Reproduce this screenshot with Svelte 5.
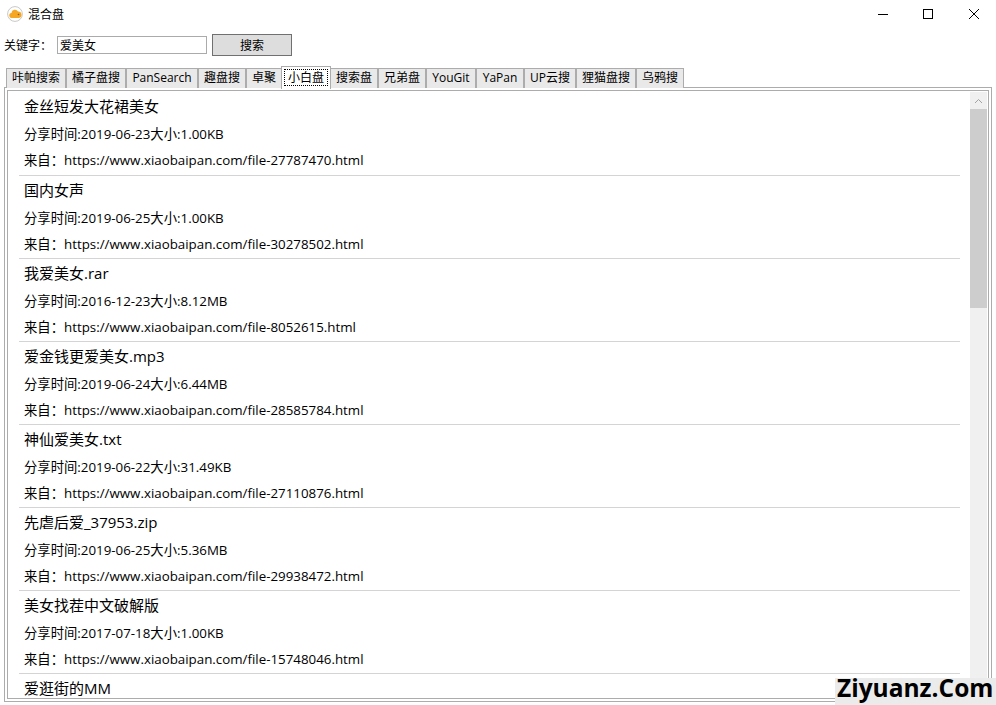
<script>
  const tabs = [
    { name: "咔帕搜索", width: 60 },
    { name: "橘子盘搜", width: 60 },
    { name: "PanSearch", width: 72 },
    { name: "趣盘搜", width: 48 },
    { name: "卓聚", width: 36 },
    { name: "小白盘", width: 50 },
    { name: "搜索盘", width: 48 },
    { name: "兄弟盘", width: 48 },
    { name: "YouGit", width: 50 },
    { name: "YaPan", width: 48 },
    { name: "UP云搜", width: 52 },
    { name: "狸猫盘搜", width: 60 },
    { name: "乌鸦搜", width: 48 }
  ];
  const active = 5;
  const results = [
    { title: "金丝短发大花裙美女", date: "2019-06-23", size: "1.00KB", id: "27787470" },
    { title: "国内女声", date: "2019-06-25", size: "1.00KB", id: "30278502" },
    { title: "我爱美女.rar", date: "2016-12-23", size: "8.12MB", id: "8052615" },
    { title: "爱金钱更爱美女.mp3", date: "2019-06-24", size: "6.44MB", id: "28585784" },
    { title: "神仙爱美女.txt", date: "2019-06-22", size: "31.49KB", id: "27110876" },
    { title: "先虐后爱_37953.zip", date: "2019-06-25", size: "5.36MB", id: "29938472" },
    { title: "美女找茬中文破解版", date: "2017-07-18", size: "1.00KB", id: "15748046" },
    { title: "爱逛街的MM" }
  ];
</script>

<div class="window">
  <header class="titlebar">
    <svg class="logo" width="16" height="16" viewBox="0 0 16 16">
      <circle cx="8" cy="8" r="7.4" fill="#fff" stroke="#c8c8c8" />
      <path d="M5 12a2.5 2.5 0 0 1 -.5-5 3.5 3.5 0 0 1 6.5-1.5 3.3 3.3 0 0 1 1 6.5z" fill="#f5a623" />
      <circle cx="11.5" cy="8.5" r="0.8" fill="#8a5a12" />
    </svg>
    <span class="titlebar__name">混合盘</span>
    <div class="controls">
      <svg width="12" height="12" viewBox="0 0 12 12"><path d="M1 6.5h10" stroke="#000" fill="none" /></svg>
      <svg width="12" height="12" viewBox="0 0 12 12"><rect x="1.5" y="1.5" width="9" height="9" stroke="#000" fill="none" /></svg>
      <svg class="controls__close" width="12" height="12" viewBox="0 0 12 12"><path d="M1 1l10 10M11 1L1 11" stroke="#000" fill="none" /></svg>
    </div>
  </header>

  <div class="search">
    <span class="search__label">关键字：</span>
    <input class="search__input" value="爱美女" />
    <button class="search__button">搜索</button>
  </div>

  <div class="tabs">
    {#each tabs as tab, i}
      <div class="tab" class:tab--active={i === active} style="width: {tab.width}px">
        {#if i === active}
          <span class="tab__focus">{tab.name}</span>
        {:else}
          {tab.name}
        {/if}
      </div>
    {/each}
  </div>

  <div class="panel">
    <div class="panel__inner">
      <div class="list">
        {#each results as r}
          <div class="row">
            <div class="row__title">{r.title}</div>
            {#if r.date}
              <div class="row__line">分享时间:{r.date}大小:{r.size}</div>
              <div class="row__line row__line--src">来自：https://www.xiaobaipan.com/file-{r.id}.html</div>
            {/if}
          </div>
        {/each}
      </div>
      <div class="scrollbar">
        <div class="scrollbar__arrow">
          <svg width="9" height="6" viewBox="0 0 9 6"><path d="M1 5l3.5-3.5L8 5" stroke="#a3a3a3" fill="none" /></svg>
        </div>
        <div class="scrollbar__thumb"></div>
      </div>
    </div>
  </div>

  <div class="watermark">Ziyuanz.Com</div>
</div>

<style>
  :global(body) {
    margin: 0;
    background: #fff;
  }

  .window {
    position: relative;
    width: 996px;
    height: 705px;
    overflow: hidden;
    background: #fff;
    color: #000;
    font-family: "Open Sans", "Noto Sans CJK SC", sans-serif;
  }

  .titlebar {
    display: flex;
    align-items: center;
    height: 28px;
    padding-left: 7px;
  }

  .logo {
    margin-right: 5px;
  }

  .titlebar__name {
    font-size: 12px;
  }

  .controls {
    display: flex;
    gap: 33px;
    margin-left: auto;
    margin-right: 16px;
  }

  .controls__close {
    margin-left: 1px;
  }

  .search {
    display: flex;
    align-items: center;
    height: 34px;
    padding-left: 4px;
    font-size: 12px;
  }

  .search__label {
    width: 53px;
  }

  .search__input {
    box-sizing: border-box;
    width: 150px;
    height: 18px;
    padding: 0 2px;
    border: 1px solid #ababab;
    background: #fff;
    font: inherit;
    color: #000;
    outline: none;
  }

  .search__button {
    box-sizing: border-box;
    width: 80px;
    height: 22px;
    margin-left: 5px;
    padding: 0;
    border: 1px solid #707070;
    background: #dddddd;
    font: inherit;
    color: #000;
  }

  .tabs {
    display: flex;
    align-items: flex-end;
    height: 26px;
    padding-left: 6px;
    box-sizing: border-box;
    position: relative;
    z-index: 1;
  }

  .tab {
    box-sizing: border-box;
    flex: none;
    height: 20px;
    border: 1px solid #acacac;
    border-bottom: none;
    background: #e9e9e9;
    font-size: 12px;
    line-height: 18px;
    text-align: center;
    white-space: nowrap;
  }

  .tab--active {
    position: relative;
    height: 23px;
    margin: 0 -1px -1px;
    padding: 2px 2px 0;
    background: #fff;
  }

  .tab__focus {
    display: block;
    height: 17px;
    line-height: 17px;
    outline: 1px dotted #000;
    outline-offset: -1px;
  }

  .panel {
    box-sizing: border-box;
    height: 615px;
    margin: -1px 4px 0;
    padding: 2px;
    border: 1px solid #acacac;
  }

  .panel__inner {
    box-sizing: border-box;
    display: flex;
    height: 100%;
    overflow: hidden;
    border: 1px solid #acacac;
  }

  .list {
    flex: 1;
    min-width: 0;
    padding: 1.4px 10px 0 11px;
    overflow: hidden;
  }

  .row {
    box-sizing: border-box;
    height: 83.17px;
    padding-left: 5px;
    border-bottom: 1px solid #d4d4d4;
  }

  .row__title {
    height: 29px;
    font-size: 15px;
    line-height: 29px;
  }

  .row__line {
    height: 26px;
    font-size: 13.33px;
    line-height: 26px;
  }

  .row__line--src {
    height: 27px;
    line-height: 27px;
  }

  .scrollbar {
    flex: none;
    width: 17px;
    margin: 1px 1px 1px 0;
    background: #f0f0f0;
  }

  .scrollbar__arrow {
    display: flex;
    align-items: center;
    justify-content: center;
    height: 17px;
  }

  .scrollbar__thumb {
    height: 199px;
    background: #cdcdcd;
  }

  .watermark {
    position: absolute;
    right: 0;
    bottom: 0;
    box-sizing: border-box;
    width: 161px;
    height: 27px;
    padding-left: 2px;
    background: #ebebeb;
    font-weight: 700;
    font-size: 24.5px;
    line-height: 20px;
    white-space: nowrap;
  }
</style>
